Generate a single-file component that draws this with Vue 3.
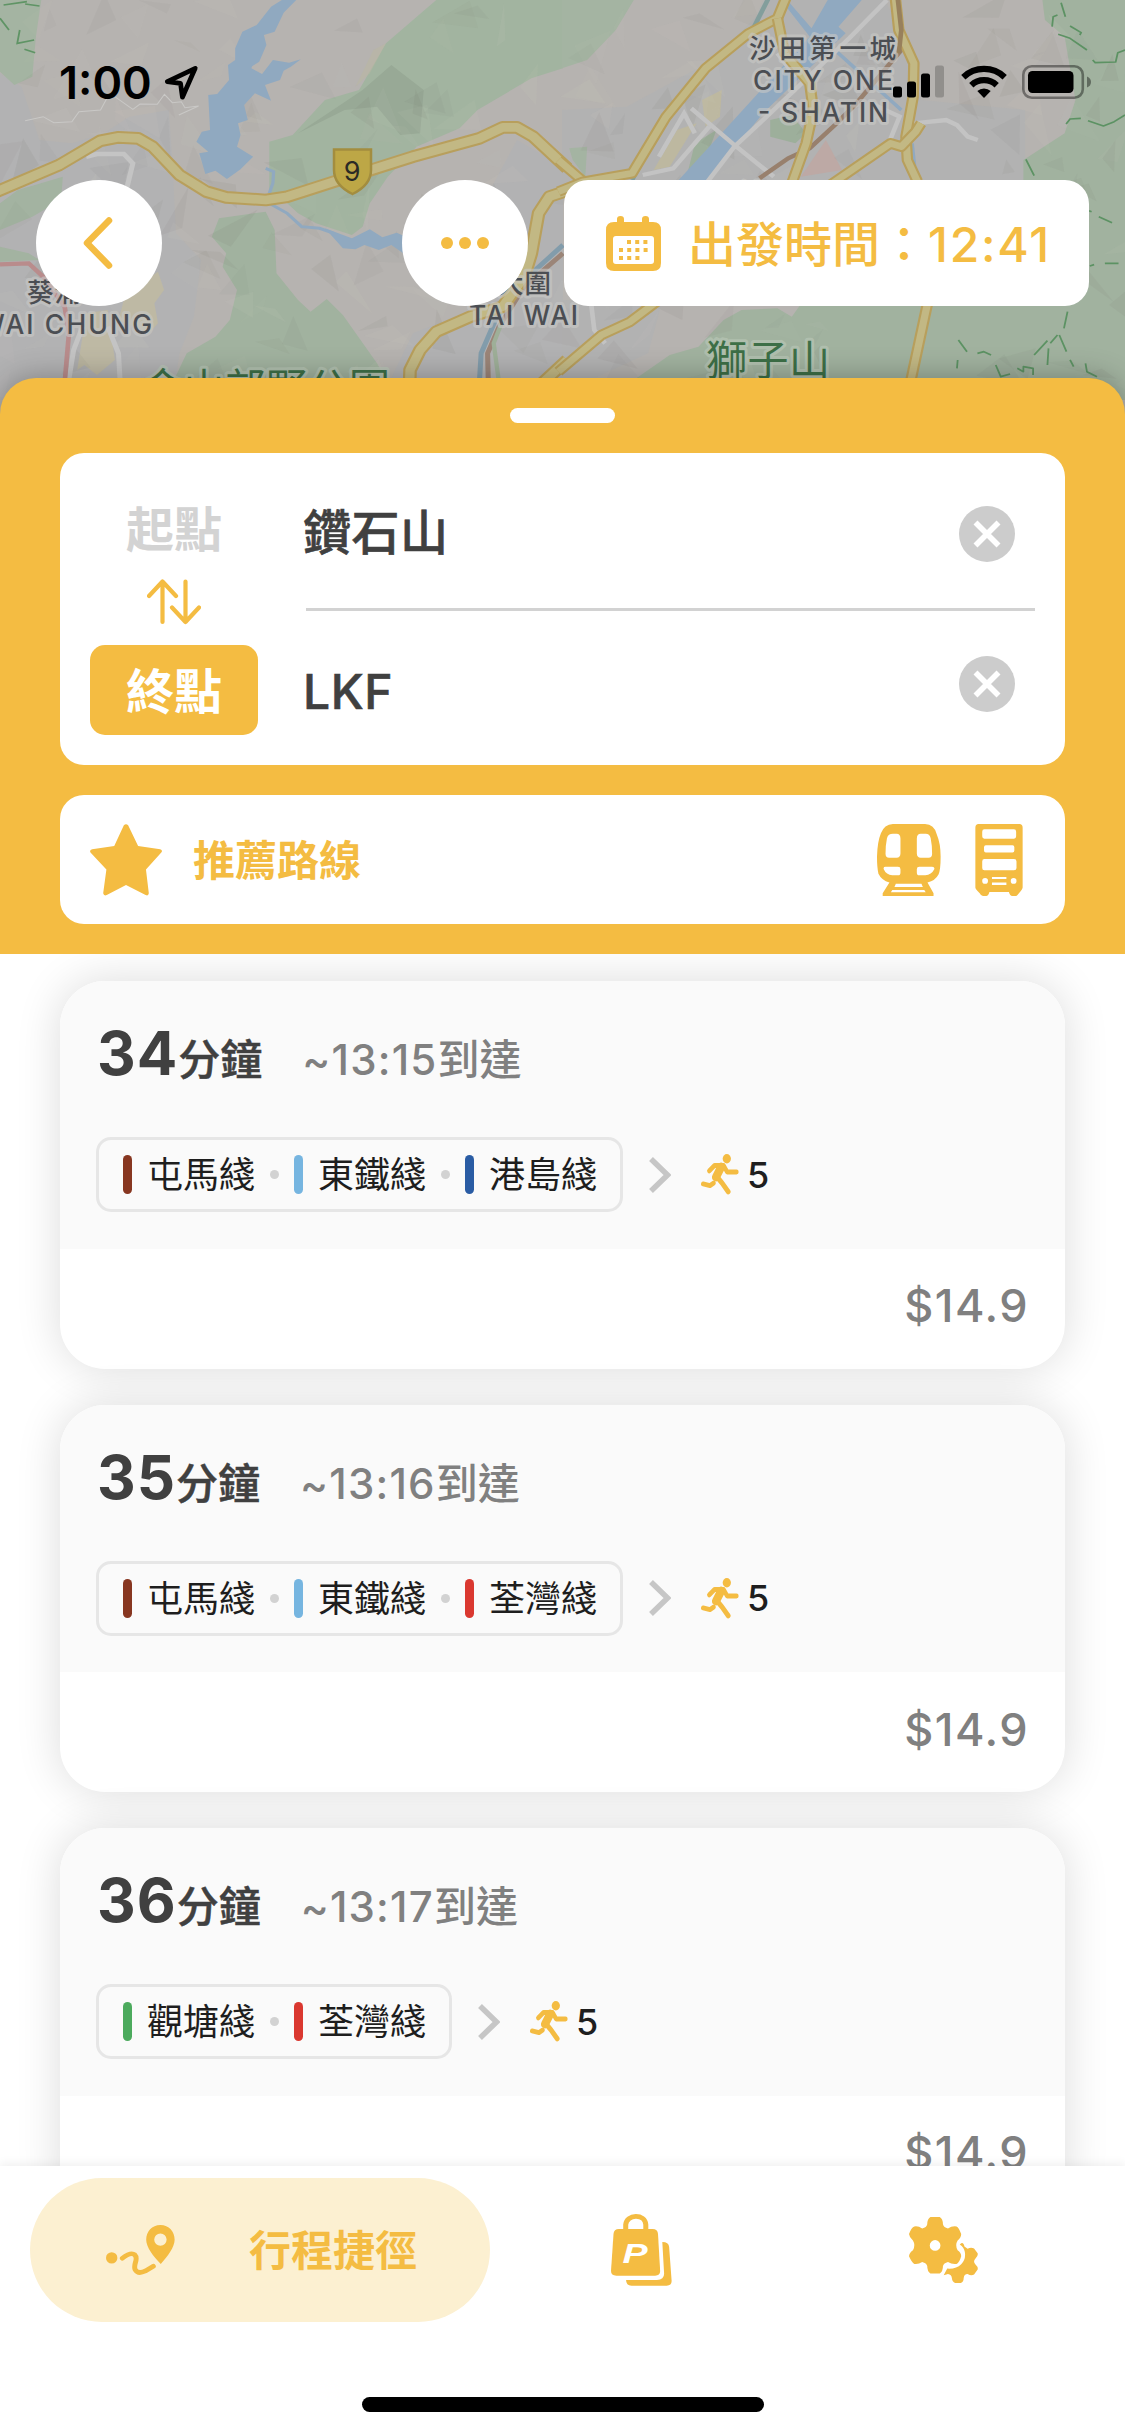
<script setup>
const routes = [
  {
    minutes: 34,
    arrival: '13:15',
    lines: [
      { name: '屯馬綫', color: '#873620' },
      { name: '東鐵綫', color: '#76b5e0' },
      { name: '港島綫', color: '#2a5ca4' },
    ],
    walk: 5,
    fare: '$14.9',
  },
  {
    minutes: 35,
    arrival: '13:16',
    lines: [
      { name: '屯馬綫', color: '#873620' },
      { name: '東鐵綫', color: '#76b5e0' },
      { name: '荃灣綫', color: '#da3830' },
    ],
    walk: 5,
    fare: '$14.9',
  },
  {
    minutes: 36,
    arrival: '13:17',
    lines: [
      { name: '觀塘綫', color: '#4caa5d' },
      { name: '荃灣綫', color: '#da3830' },
    ],
    walk: 5,
    fare: '$14.9',
  },
]

// Terrain relief: small translucent facets scattered with a seeded generator.
let seed = 41
const rand = () => {
  seed = (seed * 16807) % 2147483647
  return seed / 2147483647
}
const facets = Array.from({ length: 260 }, () => {
  const x = rand() * 1125
  const y = rand() * 400
  const pts = [0, 1, 2].map((i) => {
    const a = i * 2.09 + rand() * 1.6
    const r = 6 + rand() * 26
    return `${(x + Math.cos(a) * r).toFixed(1)},${(y + Math.sin(a) * r).toFixed(1)}`
  })
  return { points: pts.join(' '), fill: rand() > 0.45 ? '#6d6a60' : '#d6d4c4', o: 0.03 + rand() * 0.06 }
})

const roadsLeft = [
  'M-20 580L165 495L280 422L330 412L385 415L425 440L500 525L575 575L630 592L740 600L800 590L930 545L1150 470L1335 415L1400 382L1440 382L1485 410L1580 505',
  'M1140 1180L1142 1110L1170 1050L1215 995L1310 950L1400 920L1460 830L1480 760L1500 640L1530 590L1580 572',
  'M1510 1150L1580 1080',
]
const roadsRight = [
  'M-10 480L60 545',
  'M-10 575L60 545L195 520L290 350L400 205L520 100L600 55L625 -10',
  'M600 55L620 160L690 250L700 330L680 430L640 550',
  'M928 -10L938 90L980 190L978 290L958 410L962 480L990 545',
  'M740 560L915 430L945 440L985 395L1000 370',
  'M-10 1115L110 1005L190 965L270 900',
  'M970 1150L1020 900',
]
</script>

<template>
  <div class="screen" lang="zh-HK">
    <svg class="map" viewBox="0 0 1125 430" aria-hidden="true">
      <rect width="1125" height="430" fill="#b6b3b0" />
      <g transform="scale(.35905 .33333)">
        <path d="M0 220L60 260L110 420L200 430L290 400L360 350L470 330L480 480L490 700L560 780L540 950L500 1060L480 1200H0Z" fill="#b2b2b3" />
        <path d="M1440 420L1568 500V1200H1060L1150 1000L1380 900L1340 620Z" fill="#b2b2b3" />
        <path d="M0 0H115L100 110L90 230L40 255L0 215Z" fill="#a4b4a2" />
        <path d="M1215 0H1568V205L1480 235L1330 330L1280 385L1160 440L1080 530L1030 610L1010 680L980 705L880 670L830 640L800 610L750 580V425L815 405L905 300L1000 270L1075 130Z" fill="#a2b4a0" />
        <path d="M1090 195L1180 270L1170 400L1115 405L1050 320L960 330L830 400L1010 270Z" fill="#98a996" />
        <path d="M610 655L740 635L765 690L770 820L830 900L865 935L910 897L955 945L1050 1090L1080 1150H480L520 1060L600 1010L640 960L660 870L620 800L630 760L590 710Z" fill="#a1b29f" />
        <path d="M0 610L50 570L175 530L170 600L90 650L0 690ZM0 740L80 760L110 780L0 785Z" fill="#a3b3a1" />
        <path d="M440 815L457 870L430 910L440 970L415 1000L330 960L350 880ZM240 940L300 930L320 1080L270 1125L235 1095L215 1110Z" fill="#beb9a4" />
        <path d="M1040 150L1075 130L1030 220L990 260Z" fill="#b9b79f" opacity=".5" />
      </g>
      <g transform="translate(562) scale(.35905 .33333)">
        <path d="M0 330L180 320L420 180L540 50L560 0H900L960 130L1000 300L1290 330V560H0ZM0 900H280L240 1060L60 1150H0Z" fill="#b2b2b2" />
        <path d="M0 0H200L150 90L70 180L0 205ZM20 445L70 440L65 530L30 480Z" fill="#a4b4a2" />
        <path d="M1338 0H1580V1200H120L300 1065L380 1040L450 960L500 930L600 925L640 950L700 860L1285 700V480L1400 400L1430 300L1400 110L1345 60Z" fill="#a1b29f" />
        <path d="M370 430L430 390L400 480L345 540ZM580 360L640 345L680 400L650 430L580 410Z" fill="#9daf9b" />
        <path d="M390 300L445 270L440 350L400 380ZM320 390L375 370L300 500L255 510Z" fill="#bdb8a0" />
        <path d="M735 420L780 510L665 530Z" fill="#bda9a5" />
      </g>
      <polygon v-for="(f, i) in facets" :key="i" :points="f.points" :fill="f.fill" :opacity="f.o" />
      <g transform="scale(.35905 .33333)" fill="none">
        <path d="M785 0H825L790 38L765 95L735 105L742 135L722 185L700 200L695 155L705 120L720 150L700 205L730 222L760 180L805 188L838 178L810 200L790 212L780 240L738 255L755 302L710 280L680 315L690 360L663 370L670 405L660 440L705 470L670 508L632 537L600 512L572 522L555 460L580 455L547 425L562 395L585 390L580 285L605 282L638 240L635 195L655 180V145L675 95L715 75L755 20Z" fill="#90a9c0" />
        <path d="M740 505L762 515L760 550L750 580M750 610L800 640L840 680L890 685L930 700" stroke="#90a9c0" stroke-width="9" />
        <path d="M905 685L980 715L1030 688L1065 712L1105 698L1130 710V765L1090 735L1055 750L1015 735L990 748L955 745Z" fill="#90a9c0" />
        <path d="M240 470L270 462L345 462L370 490L352 570L340 650M230 980L205 1050L190 1150M300 980L330 1060L335 1150" stroke="#c4c4c4" stroke-width="14" />
        <path d="M70 362L120 350L150 368L200 365L220 335L280 330L300 290L320 290L370 328L390 312L438 313L458 283L480 308L505 305L515 323L553 318L498 345" stroke="#c9c8c6" stroke-width="3" />
        <path d="M0 793L80 790L120 830L180 920L192 1000L180 1150" stroke="#b98c8c" stroke-width="13" />
        <path d="M1568 735L1450 850L1380 960L1340 1060L1335 1150" stroke="#829cab" stroke-width="14" />
        <path d="M1568 760L1460 860L1390 980L1358 1060L1360 1150" stroke="#9b8578" stroke-width="14" />
        <path d="M1400 960L1375 1030L1390 1150" stroke="#9eaf98" stroke-width="12" />
        <path d="M0 55L25 90M10 15L75 5M70 12L110 18M55 90L48 130L95 120M68 148L98 158" stroke="#5f9465" stroke-width="5" />
        <g v-for="d in roadsLeft" :key="d" stroke-linejoin="round">
          <path :d="d" stroke="#b89f5c" stroke-width="38" />
          <path :d="d" stroke="#c2b884" stroke-width="26" />
        </g>
      </g>
      <g transform="translate(562) scale(.35905 .33333)" fill="none">
        <path d="M740 0H835L770 80L790 100L560 340L410 540H325L470 370L690 110L610 0L635 10L695 85Z" fill="#90a9c0" />
        <path d="M760 150L945 330M975 430L982 500" stroke="#90a9c0" stroke-width="10" />
        <path d="M905 0L800 115L560 360L480 440L405 545M360 325L480 435L590 530M370 400L340 340L270 470M225 525L310 505L410 380M980 370L1070 360L1100 375L1130 410L1158 420M600 160L650 230M910 430L940 350L860 310M80 900L90 990L120 1030" stroke="#c3c3c3" stroke-width="13" />
        <path d="M575 -5L535 80L400 210L290 350L195 540" stroke="#839e9c" stroke-width="13" />
        <path d="M935 0L945 150L820 310L760 375L690 445L630 475L550 535" stroke="#98806d" stroke-width="13" />
        <g v-for="d in roadsRight" :key="d" stroke-linejoin="round">
          <path :d="d" stroke="#b89f5c" stroke-width="32" />
          <path :d="d" stroke="#c2b884" stroke-width="20" />
        </g>
        <path d="M935 -5L945 90L938 160" stroke="#98805c" stroke-width="13" />
        <path d="M1390 8L1402 50M1365 80L1368 50L1380 45M1415 78L1446 98L1442 105M1382 103L1415 115L1462 150M1478 180L1485 188L1542 186L1548 158L1568 150M1404 372L1415 357L1445 355M1465 362L1508 378L1538 365L1568 345M1292 478L1315 527M1468 632L1475 635M1495 650L1532 668M1470 798L1482 794M1512 790L1550 790M1408 935L1398 985M1380 1005L1360 1030M1385 1005L1405 1055M1104 1020L1128 1055M1102 1080L1100 1105M1157 1060L1175 1055L1195 1065M1208 1095L1222 1130L1248 1122M1268 1105L1285 1115V1100L1312 1105V1125M1315 1065L1352 1022M1355 1045L1352 1095M1415 1080L1425 1100M1458 1090L1462 1115L1490 1130" stroke="#5c9263" stroke-width="5" stroke-linejoin="round" />
      </g>
      <path d="M334 149.500H371V170Q371 185 352.500 194Q334 185 334 170Z" fill="#bda746" stroke="#a38d3f" stroke-width="2.500" />
      <text class="shield" x="352" y="181" text-anchor="middle">9</text>
      <g class="place">
        <text x="749" y="58" textLength="147">沙田第一城</text>
        <text x="753" y="89.500" textLength="140">CITY ONE</text>
        <text x="758" y="122" textLength="130">- SHATIN</text>
        <text x="740" y="204">沙田</text>
        <text x="497" y="293" textLength="54">大圍</text>
        <text x="469" y="324.500" textLength="109">TAI WAI</text>
        <text x="27" y="302" textLength="54">葵涌</text>
        <text x="-42" y="334" textLength="194">KWAI CHUNG</text>
      </g>
      <g class="park">
        <text x="142" y="403" textLength="248">金山郊野公園</text>
        <text x="706" y="375" textLength="124">獅子山</text>
      </g>
    </svg>

    <header class="status">
      <div class="clock">
        <span>1:00</span>
        <svg width="36" height="37" viewBox="0 0 38 38"><path d="M34 4L4.500 18L18.500 20L20.500 34.500Z" fill="none" stroke="#000" stroke-width="5" stroke-linejoin="round" /></svg>
      </div>
      <div class="signals">
        <svg width="52" height="33" viewBox="0 0 52 33">
          <rect x="0" y="21.500" width="9" height="11" rx="2.500" /><rect x="14" y="16.500" width="9" height="16" rx="2.500" /><rect x="28" y="8.500" width="9" height="24" rx="2.500" /><rect x="42" y=".5" width="9" height="32" rx="2.500" opacity=".2" />
        </svg>
        <svg width="46" height="33" viewBox="0 0 46 33">
          <g fill="none" stroke="#000" stroke-width="6.200"><path d="M2.300 12.200A30 30 0 0 1 43.700 12.200" /><path d="M10.300 20.200A18.500 18.500 0 0 1 35.700 20.200" /></g>
          <path d="M23 33L16.300 26A10 10 0 0 1 29.700 26Z" />
        </svg>
        <svg width="70" height="34" viewBox="0 0 70 34">
          <rect x="1.300" y="1.300" width="59.500" height="31.400" rx="8.500" fill="none" stroke="#000" stroke-opacity=".4" stroke-width="2.600" />
          <rect x="6" y="6" width="45.500" height="22" rx="4.500" />
          <path d="M65 11.500Q69 13 69 17T65 22.500Z" opacity=".4" />
        </svg>
      </div>
    </header>

    <div class="controls">
      <button class="round" aria-label="返回">
        <svg width="30" height="52" viewBox="0 0 30 52"><path d="M26 3.500L4 26L26 48.500" fill="none" stroke="#f4bc42" stroke-width="6.500" stroke-linecap="round" stroke-linejoin="round" /></svg>
      </button>
      <button class="round more" aria-label="更多">
        <svg width="50" height="12" viewBox="0 0 50 12" fill="#f4bc42"><circle cx="7" cy="6" r="6" /><circle cx="25" cy="6" r="6" /><circle cx="43" cy="6" r="6" /></svg>
      </button>
      <button class="departure">
        <svg width="55" height="55" viewBox="0 0 55 55">
          <path d="M8 6H11V3Q11 0 14.500 0T18 3V6H36V3Q36 0 39.500 0T43 3V6H47Q55 6 55 14V47Q55 55 47 55H8Q0 55 0 47V14Q0 6 8 6ZM10 20Q7 20 7 23V45Q7 48 10 48H45Q48 48 48 45V23Q48 20 45 20Z" fill="#f4bc42" fill-rule="evenodd" />
          <path d="M21 26H42M13 34H42M13 42H34" stroke="#f4bc42" stroke-width="4" stroke-dasharray="4 4.200" />
        </svg>
        <span>出發時間：<b>12:41</b></span>
      </button>
    </div>

    <section class="sheet">
      <i class="handle"></i>
      <div class="search">
        <div class="ends">
          <span class="end">起點</span>
          <svg width="54" height="46" viewBox="0 0 54 46" fill="none" stroke="#f4bc42" stroke-width="4.200" stroke-linecap="round" stroke-linejoin="round"><path d="M15.500 43V2.500M2 17L15.500 2.500L29 17M38.500 2.500V43M25 28.500L38.500 43L52 28.500" /></svg>
          <span class="end active">終點</span>
        </div>
        <div class="fields">
          <div class="field">
            <span>鑽石山</span>
            <svg width="56" height="56" viewBox="0 0 56 56"><circle cx="28" cy="28" r="28" fill="#ccc" /><path d="M16.500 16.500L39.500 39.500M39.500 16.500L16.500 39.500" stroke="#fff" stroke-width="5.600" /></svg>
          </div>
          <div class="field second">
            <span>LKF</span>
            <svg width="56" height="56" viewBox="0 0 56 56"><circle cx="28" cy="28" r="28" fill="#ccc" /><path d="M16.500 16.500L39.500 39.500M39.500 16.500L16.500 39.500" stroke="#fff" stroke-width="5.600" /></svg>
          </div>
        </div>
      </div>
      <div class="recommend">
        <svg width="72" height="72" viewBox="250 161 202 217" preserveAspectRatio="none" fill="#f4bc42"><path d="M345 165Q351 158 357 165L385 227L447 237Q455 240 450 247L407 298L415 370Q414 379 406 375L351 345L297 375Q289 379 287 370L296 298L252 248Q247 240 256 237L318 227Z" /></svg>
        <strong>推薦路線</strong>
        <div class="modes">
          <svg width="64" height="72" viewBox="877 132 180 177" preserveAspectRatio="none" fill="#f4bc42">
            <path fill-rule="evenodd" d="M922 132H1012Q1038 133 1045 157Q1056 180 1056 212Q1056 245 1050 256Q1041 271 1019 276L1036 302V309H893V302L912 276Q890 270 881 254Q877 240 877 212Q878 176 888 155Q897 133 922 132ZM922 156Q908 156 905 167Q901 184 901 205Q901 215 911 215H932Q943 215 943 204V168Q943 156 932 156ZM1000 156Q989 156 989 168V204Q989 215 1000 215H1022Q1032 215 1032 205Q1032 184 1028 167Q1025 156 1014 156ZM901 237Q894 237 896 243Q903 257 920 258H936Q943 258 943 251V243Q943 237 936 237ZM996 237Q989 237 989 243V251Q989 258 996 258H1013Q1030 257 1038 243Q1040 237 1032 237ZM930 279L926 287H1006L1002 279ZM920 294L916 300H1014L1010 294Z" />
          </svg>
          <svg width="48" height="72" viewBox="1150 132 133 177" preserveAspectRatio="none" fill="#f4bc42">
            <path fill-rule="evenodd" d="M1160 132H1273Q1282 132 1282 141V288Q1282 292 1270 304Q1267 309 1262 309H1253Q1247 309 1244 299H1190Q1187 309 1181 309H1172Q1167 309 1163 302Q1151 292 1151 288V141Q1151 132 1160 132ZM1176 145Q1170 145 1170 151V162Q1170 168 1176 168H1258Q1264 168 1264 162V151Q1264 145 1258 145ZM1180 184Q1175 184 1175 189V197Q1175 202 1180 202H1254Q1259 202 1259 197V189Q1259 184 1254 184ZM1176 218Q1170 218 1170 224V240Q1170 246 1176 246H1258Q1265 246 1265 240V224Q1265 218 1258 218ZM1197 262V267H1237V262ZM1197 276V282H1237V276Z" />
            <ellipse cx="1178" cy="272" rx="8" ry="7" fill="#fff" /><ellipse cx="1257" cy="272" rx="8" ry="7" fill="#fff" />
          </svg>
        </div>
      </div>
    </section>

    <main class="results">
      <article v-for="r in routes" :key="r.minutes" class="card">
        <div class="summary">
          <div class="time">
            <b>{{ r.minutes }}</b><span class="unit">分鐘</span><span class="arrive"><span class="clocked">~{{ r.arrival }}</span>到達</span>
          </div>
          <div class="legs">
            <div class="lines">
              <template v-for="(l, i) in r.lines" :key="l.name">
                <i v-if="i" class="dot"></i>
                <i class="bar" :style="{ background: l.color }"></i>
                <span class="line">{{ l.name }}</span>
              </template>
            </div>
            <svg class="next" width="22" height="36" viewBox="0 0 22 36"><path d="M2 2L18.500 18L2 34" fill="none" stroke="#c6c6c6" stroke-width="5.500" /></svg>
            <svg class="runner" width="38" height="41" viewBox="390 940 106 100" preserveAspectRatio="none">
              <ellipse cx="462" cy="951.500" rx="11.500" ry="11.500" fill="#f4bc42" />
              <g fill="none" stroke="#f4bc42" stroke-linecap="round" stroke-linejoin="round">
                <path d="M413 981L428 968H453L463 984H489" stroke-width="12" />
                <path d="M446 972L432 996" stroke-width="22" />
                <path d="M433 994L449 1011L466 1032" stroke-width="13" />
                <path d="M396 1013L415 1017L425 1011" stroke-width="12" />
              </g>
            </svg>
            <span class="walk">{{ r.walk }}</span>
          </div>
        </div>
        <div class="fare">{{ r.fare }}</div>
      </article>
    </main>

    <nav class="tabs">
      <button class="tab current">
        <svg width="69" height="50" viewBox="295 254 194 149" preserveAspectRatio="none">
          <path fill="#f4bc42" fill-rule="evenodd" d="M448 254C472 254 488 273 488 298C488 320 468 348 449 370C428 348 408 320 408 298C408 273 424 254 448 254ZM448 279A17 18 0 1 0 448 316A17 18 0 1 0 448 279Z" />
          <ellipse cx="311" cy="352" rx="16" ry="17" fill="#f4bc42" />
          <path d="M341 353C353 343 366 334 376 343C388 356 370 370 377 387C384 400 398 395 406 391L428 377" fill="none" stroke="#f4bc42" stroke-width="14" stroke-linecap="round" />
        </svg>
        <strong>行程捷徑</strong>
      </button>
      <button class="tab" aria-label="商店">
        <svg width="61" height="72" viewBox="136 342 170 216" preserveAspectRatio="none" fill="#f4bc42">
          <path d="M177 394V374C179 342 231 340 233 374V394" fill="none" stroke="#f4bc42" stroke-width="14" />
          <path d="M158 387H252Q266 387 267 402L273 513Q273 527 259 527H151Q136 527 136 513L143 402Q144 387 158 387Z" />
          <path d="M279 426Q297 426 298 441L305 543Q305 557 291 557H193Q178 557 178 540H264Q284 539 284 521Z" />
          <text class="mark" transform="translate(168 489) scale(1.250 1)" x="0" y="0">P</text>
        </svg>
      </button>
      <button class="tab" aria-label="設定">
        <svg width="69" height="66" viewBox="968 352 193 197" preserveAspectRatio="none" fill="#f4bc42">
          <path d="M1114 430Q1121 427 1123 440L1132 447Q1141 441 1150 446L1160 460Q1162 467 1154 476Q1146 485 1154 494Q1162 502 1160 509L1150 524Q1141 528 1132 522Q1122 522 1121 534Q1121 546 1113 549H1097Q1089 546 1088 535Q1087 523 1077 522L1065 526L1075 506Q1100 508 1114 493Q1128 477 1124 456Q1122 443 1110 434Z" />
          <path fill-rule="evenodd" stroke="#fff" stroke-width="0" d="M1028 352H1054Q1063 358 1063 374Q1065 384 1077 386Q1088 378 1101 380Q1107 382 1114 403Q1114 414 1104 422Q1096 436 1104 451Q1114 458 1114 469Q1109 488 1101 492Q1088 494 1077 486Q1065 489 1063 498Q1063 514 1054 521H1028Q1019 514 1019 498Q1017 489 1005 486Q994 494 983 492Q976 488 968 469Q969 458 979 451Q987 436 979 422Q969 414 968 403Q975 382 983 380Q994 378 1005 386Q1017 384 1019 374Q1019 358 1028 352ZM1041 421A15 16 0 1 0 1041 453A15 16 0 1 0 1041 421Z" />
        </svg>
      </button>
      <i class="home"></i>
    </nav>
  </div>
</template>

<style>
body {
  background: #fff;
}
</style>

<style scoped>
.screen {
  position: relative;
  display: flex;
  flex-direction: column;
  width: 1125px;
  height: 2436px;
  overflow: hidden;
  background: #fff;
  color: #404040;
  font-family: Inter, 'Noto Sans CJK TC', sans-serif;
}
.screen * {
  box-sizing: border-box;
}
svg {
  display: block;
  flex: none;
}
button {
  border: 0;
  padding: 0;
  background: none;
  font: inherit;
  color: inherit;
}
.map {
  position: absolute;
  left: 0;
  top: 0;
  width: 1125px;
  height: 430px;
}
.place text,
.park text {
  paint-order: stroke;
  stroke: rgba(200, 200, 198, 0.6);
  stroke-width: 6px;
  stroke-linejoin: round;
}
.place text {
  font-size: 26.500px;
  font-weight: 500;
  fill: #4b4e53;
}
.park text {
  font-size: 41px;
  font-weight: 400;
  fill: #3d6f47;
  stroke: rgba(184, 198, 182, 0.7);
}
.shield {
  font-size: 27px;
  fill: #2b2b25;
}
.status {
  position: relative;
  display: flex;
  justify-content: space-between;
  height: 180px;
  padding: 65px 33px 0 59px;
}
.clock {
  display: flex;
  height: 34px;
  align-items: center;
  gap: 11px;
  font-size: 45px;
  font-weight: 600;
  color: #000;
}
.signals {
  display: flex;
  align-items: flex-start;
  gap: 15.500px;
}
.controls {
  position: relative;
  display: flex;
  height: 126px;
  padding: 0 36px;
}
.round {
  display: flex;
  align-items: center;
  justify-content: center;
  width: 126px;
  height: 126px;
  border-radius: 50%;
  background: #fff;
}
.round:first-child {
  padding-right: 2px;
}
.more {
  margin-left: 240px;
}
.departure {
  display: flex;
  align-items: center;
  width: 525px;
  margin-left: 36px;
  padding-left: 42px;
  gap: 27px;
  border-radius: 24px;
  background: #fff;
  color: #f4bc42;
  font-size: 48px;
  font-weight: 500;
  white-space: nowrap;
}
.departure span {
  margin-bottom: 5px;
}
.departure b {
  font-weight: 500;
  letter-spacing: 1.700px;
}
.sheet {
  position: relative;
  display: flex;
  flex-direction: column;
  align-items: center;
  flex: none;
  height: 576px;
  margin-top: 72px;
  padding-top: 30px;
  border-radius: 36px 36px 0 0;
  background: #f4bc42;
  box-shadow: 0 0 30px rgba(0, 0, 0, 0.3);
  clip-path: inset(-60px 0 0 0);
}
.handle {
  width: 105px;
  height: 15px;
  border-radius: 8px;
  background: #fff;
}
.search {
  display: flex;
  width: 1005px;
  height: 312px;
  margin-top: 30px;
  padding: 30px;
  border-radius: 24px;
  background: #fff;
}
.ends {
  display: flex;
  flex-direction: column;
  align-items: center;
  width: 168px;
}
.end {
  width: 168px;
  height: 90px;
  border-radius: 15px;
  color: #d3d3d3;
  font-size: 48px;
  font-weight: 700;
  line-height: 93px;
  text-align: center;
}
.ends svg {
  margin: 6px 0 20px;
}
.end.active {
  background: #f4bc42;
  color: #fff;
}
.fields {
  flex: 1;
  margin-left: 48px;
}
.field {
  display: flex;
  align-items: center;
  justify-content: space-between;
  height: 127.500px;
  padding: 0 20px 0 0;
  border-bottom: 3px solid #d2d2d2;
  font-size: 48px;
  font-weight: 500;
  letter-spacing: 0.500px;
  -webkit-text-stroke: 0.600px #404040;
}
.field svg {
  margin-top: -22px;
}
.field span {
  margin: -32px 0 0 -3px;
}
.field.second {
  height: 124.500px;
  border: 0;
}
.field.second svg {
  margin-top: 23px;
}
.field.second span {
  margin: 37px 0 0 -3px;
}
.recommend {
  display: flex;
  align-items: center;
  width: 1005px;
  height: 129px;
  margin-top: 30px;
  padding: 0 42px 0 30px;
  border-radius: 24px;
  background: #fff;
  color: #f4bc42;
}
.recommend strong {
  margin: 0 0 5px 31px;
  font-size: 42px;
  font-weight: 700;
}
.modes {
  display: flex;
  gap: 34px;
  margin-left: auto;
}
.results {
  display: flex;
  flex: 1;
  flex-direction: column;
  gap: 36px;
  min-height: 0;
  padding: 27px 60px 0;
  overflow: hidden;
}
.card {
  display: flex;
  flex-direction: column;
  flex: none;
  height: 387.600px;
  border-radius: 45px;
  background: #fff;
  box-shadow: 0 0 45px rgba(0, 0, 0, 0.14);
}
.summary {
  height: 267.600px;
  padding: 36px 36px 0;
  border-radius: 45px 45px 0 0;
  background: #fafafa;
}
.time {
  display: flex;
  align-items: baseline;
  height: 120px;
  margin-left: 1px;
  line-height: 72px;
  font-size: 42px;
  font-weight: 500;
}
.time b {
  font-size: 60px;
  font-weight: 700;
  letter-spacing: 1px;
}
.unit {
  -webkit-text-stroke: 0.500px #404040;
}
.arrive {
  margin-left: 40px;
  color: #808080;
}
.clocked {
  letter-spacing: 1.200px;
}
.legs {
  display: flex;
  align-items: center;
  color: #1e1e1e;
  font-size: 36px;
}
.lines {
  display: flex;
  align-items: center;
  height: 75px;
  padding: 0 23px 0 24px;
  border: 3px solid #e6e6e6;
  border-radius: 15px;
}
.line {
  margin-left: 15px;
  line-height: 41px;
  padding-top: 2px;
}
.bar {
  width: 9px;
  height: 39px;
  border-radius: 5px;
}
.dot {
  width: 9px;
  height: 9px;
  margin: 0 15px;
  border-radius: 50%;
  background: #d2d2d2;
}
.next {
  margin-left: 26px;
}
.runner {
  margin-left: 30px;
}
.walk {
  margin-left: 8px;
  font-weight: 500;
}
.fare {
  display: flex;
  align-items: center;
  justify-content: flex-end;
  height: 114px;
  padding-right: 36px;
  color: #808080;
  font-size: 45px;
  font-weight: 500;
  letter-spacing: 1.500px;
}
.tabs {
  position: relative;
  display: flex;
  flex: none;
  height: 270px;
  padding: 12px 30px 0;
  background: #fff;
  box-shadow: 0 -3px 9px rgba(0, 0, 0, 0.06);
}
.tab {
  display: flex;
  align-items: center;
  justify-content: center;
  width: 302.500px;
  height: 144px;
}
.tab.current {
  justify-content: flex-start;
  width: 460px;
  padding-left: 76px;
  border-radius: 72px;
  background: #fcf0d1;
  color: #f4bc42;
}
.tab.current strong {
  margin: 0 0 6px 74px;
  font-size: 42px;
  font-weight: 700;
}
.mark {
  font: italic bold 84px 'Liberation Sans', sans-serif;
  fill: #fff;
}
.home {
  position: absolute;
  left: 362px;
  bottom: 24px;
  width: 402px;
  height: 15px;
  border-radius: 8px;
  background: #000;
}
</style>
